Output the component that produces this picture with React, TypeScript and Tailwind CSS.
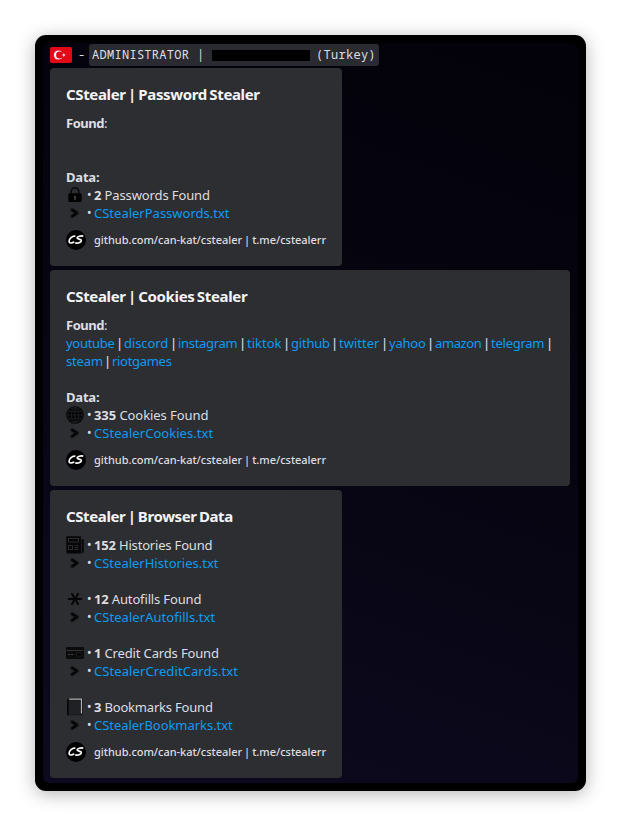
import type { ReactNode } from "react";

function Flag() {
  return (
    <svg className="h-4 w-[22px] shrink-0" viewBox="0 0 22 16">
      <rect width="22" height="16" rx="1.8" fill="#e30917" />
      <circle cx="8.4" cy="8" r="4.6" fill="#eee" />
      <circle cx="9.7" cy="8" r="3.6" fill="#e30917" />
      <path d="M11.8 8l1.4-.5 0-1.5.9 1.2 1.4-.5-.9 1.3.9 1.3-1.4-.5-.9 1.2 0-1.5z" fill="#eee" />
    </svg>
  );
}

function Lock() {
  return (
    <svg className="size-[18px]" viewBox="0 0 18 18">
      <path d="M5.2 8V5.5a3.8 3.8 0 0 1 7.6 0V8" fill="none" stroke="#0b0b0c" strokeWidth="1.6" />
      <rect x="2.3" y="7.2" width="13.4" height="8.8" rx="1.6" fill="#030303" />
      <path d="M9 9.8a1.2 1.2 0 0 1 .7 2.2l.2 1.9H8.1l.2-1.9A1.2 1.2 0 0 1 9 9.8z" fill="#3e3f42" />
    </svg>
  );
}

function Globe() {
  return (
    <svg className="size-[18px]" viewBox="0 0 18 18">
      <circle cx="9" cy="9" r="8.8" fill="#050505" />
      <g fill="none" stroke="#242528" strokeWidth=".7">
        <circle cx="9" cy="9" r="7.4" />
        <ellipse cx="9" cy="9" rx="3.6" ry="7.4" />
        <path d="M9 1.6v14.8M1.6 9h14.8M3 5.4h12M3 12.6h12" />
      </g>
    </svg>
  );
}

function Newspaper() {
  return (
    <svg className="size-[18px]" viewBox="0 0 18 18">
      <path d="M.3.3h14.6v17.2H2.2a2 2 0 0 1-1.9-2z" fill="#060606" />
      <path d="M15.7 3h2v12.5a2 2 0 0 1-2 2z" fill="#060606" />
      <g fill="none" stroke="#2a2b2e" strokeWidth="1">
        <rect x="2.5" y="2.5" width="10" height="3.6" />
        <rect x="2.5" y="9.5" width="4" height="4" />
        <path d="M8.5 9.5h4M8.5 11.5h4M8.5 13.5h4" />
      </g>
    </svg>
  );
}

function Asterisk() {
  return (
    <svg className="size-[18px]" viewBox="0 0 18 18">
      <path d="M2 9h14M5.6 3.2l6.8 11.6M12.4 3.2L5.6 14.8" stroke="#050505" strokeWidth="1.9" />
    </svg>
  );
}

function CreditCard() {
  return (
    <svg className="size-[18px]" viewBox="0 0 18 18">
      <rect y="3" width="18" height="12" rx="1.2" fill="#0b0b0b" />
      <path d="M.8 6.5h16.4" stroke="#34353a" strokeWidth="1" />
      <path d="M2.2 10.5h2M5.2 10.5h2" stroke="#45464a" strokeWidth="1" />
      <rect x="10.5" y="9" width="5.2" height="3.2" rx=".7" fill="#000" stroke="#303134" strokeWidth=".6" />
    </svg>
  );
}

function Book() {
  return (
    <svg className="size-[18px]" viewBox="0 0 18 18">
      <path d="M2.8.2h12.8q1 0 1 1v16H1.2V2q0-1.8 1.6-1.8z" fill="#151515" />
      <path d="M3.2 1.2h12.2v14.2" fill="none" stroke="#b4b4b4" strokeWidth="1.2" />
      <path d="M2.8 2.2h11.6v14.3H2.8z" fill="#202124" />
      <path d="M1.8 2v15.5" stroke="#080808" strokeWidth="1.5" />
    </svg>
  );
}

function Arrow() {
  return (
    <svg className="size-[18px]" viewBox="0 0 18 18">
      <path d="M6 5.7L11.2 9 6 12.5" fill="none" stroke="#1d1e20" strokeWidth="3.8" strokeLinecap="round" strokeLinejoin="round" />
      <path d="M6.2 6L11 9 6.2 12.2" fill="none" stroke="#060606" strokeWidth="2.3" strokeLinecap="round" strokeLinejoin="round" />
    </svg>
  );
}

function Row({ icon, children }: { icon: ReactNode; children: ReactNode }) {
  return (
    <div className="flex h-[18px] whitespace-nowrap">
      <span className="w-[21px] shrink-0">{icon}</span>
      <span className="w-[7px] shrink-0 text-[12px]">•</span>
      {children}
    </div>
  );
}

function Count({ n, label, track }: { n: string; label: string; track: string }) {
  return (
    <span className={track}>
      <b>{n}</b> {label}
    </span>
  );
}

function File({ name, track }: { name: string; track: string }) {
  return (
    <Row icon={<Arrow />}>
      <a className={`text-[#0b9cf5] ${track}`}>{name}</a>
    </Row>
  );
}

function Card({ title, track, wide, children }: { title: string; track: string; wide?: boolean; children: ReactNode }) {
  return (
    <section className={`${wide ? "w-[520px]" : "w-[292px]"} rounded-[4px] bg-[#2d2e32] p-4 text-[13px] leading-[18px] text-[#dddee1]`}>
      <h2 className={`mb-2 h-[22px] whitespace-nowrap text-[15px] font-bold leading-[20px] text-[#f3f4f5] [word-spacing:-1.2px] ${track}`}>{title}</h2>
      {children}
      <footer className="mt-2 flex h-5 items-center whitespace-nowrap text-[11px] font-medium leading-5">
        <svg className="mr-2 size-5 shrink-0" viewBox="0 0 20 20">
          <circle cx="10" cy="10" r="10" fill="#000" />
          <path d="M9.4 6.3C6.5 5.5 2.8 9 3 11.6c.3 2 3 1.6 5.3.5M17.3 6.1c-2.6-.4-6 .2-6.2 1.8-.1 1.5 4.5 1.1 4.2 3-.3 1.6-3.5 2.5-6 2" fill="none" stroke="#fff" strokeWidth="1.7" />
        </svg>
        <span className="tracking-[-0.03px] [word-spacing:-0.8px]">github.com/can-kat/cstealer | t.me/cstealerr</span>
      </footer>
    </section>
  );
}

const sites = [
  ["youtube", "w-[50px]", "tracking-[-0.3px]"],
  ["discord", "w-[46px]", "tracking-[-0.1px]"],
  ["instagram", "w-[61px]", "tracking-[-0.3px]"],
  ["tiktok", "w-[36px]", "tracking-[0px]"],
  ["github", "w-[40px]", "tracking-[-0.2px]"],
  ["twitter", "w-[42px]", "tracking-[0px]"],
  ["yahoo", "w-[38px]", "tracking-[-0.2px]"],
  ["amazon", "w-[48px]", "tracking-[-0.4px]"],
  ["telegram", "w-[55px]", "tracking-[-0.25px]"],
  ["steam", "w-[38px]", "tracking-[-0.15px]"],
  ["riotgames", "w-[62px]", "tracking-[-0.3px]"],
];

function Site({ name, width, track, last }: { name: string; width: string; track: string; last?: boolean }) {
  return (
    <span className="flex">
      <a className={`${width} ${track} text-[#0b9cf5]`}>{name}</a>
      {!last && <span className="w-[8px] font-medium">|</span>}
    </span>
  );
}

export default function App() {
  return (
    <div className="h-[826px] w-[621px] bg-white p-[35px] font-['Noto_Sans',sans-serif]">
      <main className="h-[756px] w-[551px] rounded-[11px] bg-black p-2 shadow-[0_3px_18px_rgba(0,0,0,0.3)]">
        <div className="flex h-[740px] flex-col gap-1 rounded-[6px] bg-linear-[200deg] from-[#030109] via-[#070512] to-[#0d0a20] pl-[7px] pt-px">
          <header className="-mb-[2px] flex h-[22px] items-center text-[#dddee1]">
            <Flag />
            <span className="ml-[7px] w-[10px] origin-left scale-x-125 text-[13px]">-</span>
            <div className="flex h-[22px] w-[290px] items-center rounded-[3px] bg-[#2a2b30] pl-[3px] font-['Noto_Sans_Mono','DejaVu_Sans_Mono',monospace] text-[12px] tracking-[0.28px]">
              <span className="w-[105px]">ADMINISTRATOR</span>
              <span className="w-[15px]">|</span>
              <span className="h-[11px] w-[98px] bg-black" />
              <span className="ml-[6px]">(Turkey)</span>
            </div>
          </header>
          <Card title="CStealer | Password Stealer" track="tracking-[-0.35px]">
            <p className="h-[54px]"><b className="tracking-[-0.5px]">Found</b>:</p>
            <p className="font-bold tracking-[-0.2px]">Data:</p>
            <Row icon={<Lock />}><Count n="2" label="Passwords Found" track="tracking-[-0.12px]" /></Row>
            <File name="CStealerPasswords.txt" track="tracking-[0px]" />
          </Card>
          <Card title="CStealer | Cookies Stealer" track="tracking-[-0.35px]" wide>
            <p><b className="tracking-[-0.5px]">Found</b>:</p>
            <div className="flex h-[54px] w-[488px] flex-wrap content-start">
              <span className="flex w-full">
                {sites.slice(0, 9).map(([name, width, track]) => (
                  <Site key={name} name={name} width={width} track={track} />
                ))}
              </span>
              <span className="flex w-full">
                {sites.slice(9).map(([name, width, track], i) => (
                  <Site key={name} name={name} width={width} track={track} last={i === 1} />
                ))}
              </span>
            </div>
            <p className="font-bold tracking-[-0.2px]">Data:</p>
            <Row icon={<Globe />}><Count n="335" label="Cookies Found" track="tracking-[-0.07px]" /></Row>
            <File name="CStealerCookies.txt" track="tracking-[0.05px]" />
          </Card>
          <Card title="CStealer | Browser Data" track="tracking-[-0.39px]">
            <div className="flex flex-col gap-[18px]">
              <div>
                <Row icon={<Newspaper />}><Count n="152" label="Histories Found" track="tracking-[-0.18px]" /></Row>
                <File name="CStealerHistories.txt" track="tracking-[0px]" />
              </div>
              <div>
                <Row icon={<Asterisk />}><Count n="12" label="Autofills Found" track="tracking-[-0.15px]" /></Row>
                <File name="CStealerAutofills.txt" track="tracking-[0.05px]" />
              </div>
              <div>
                <Row icon={<CreditCard />}><Count n="1" label="Credit Cards Found" track="tracking-[-0.15px]" /></Row>
                <File name="CStealerCreditCards.txt" track="tracking-[0.09px]" />
              </div>
              <div>
                <Row icon={<Book />}><Count n="3" label="Bookmarks Found" track="tracking-[-0.19px]" /></Row>
                <File name="CStealerBookmarks.txt" track="tracking-[-0.04px]" />
              </div>
            </div>
          </Card>
        </div>
      </main>
    </div>
  );
}
